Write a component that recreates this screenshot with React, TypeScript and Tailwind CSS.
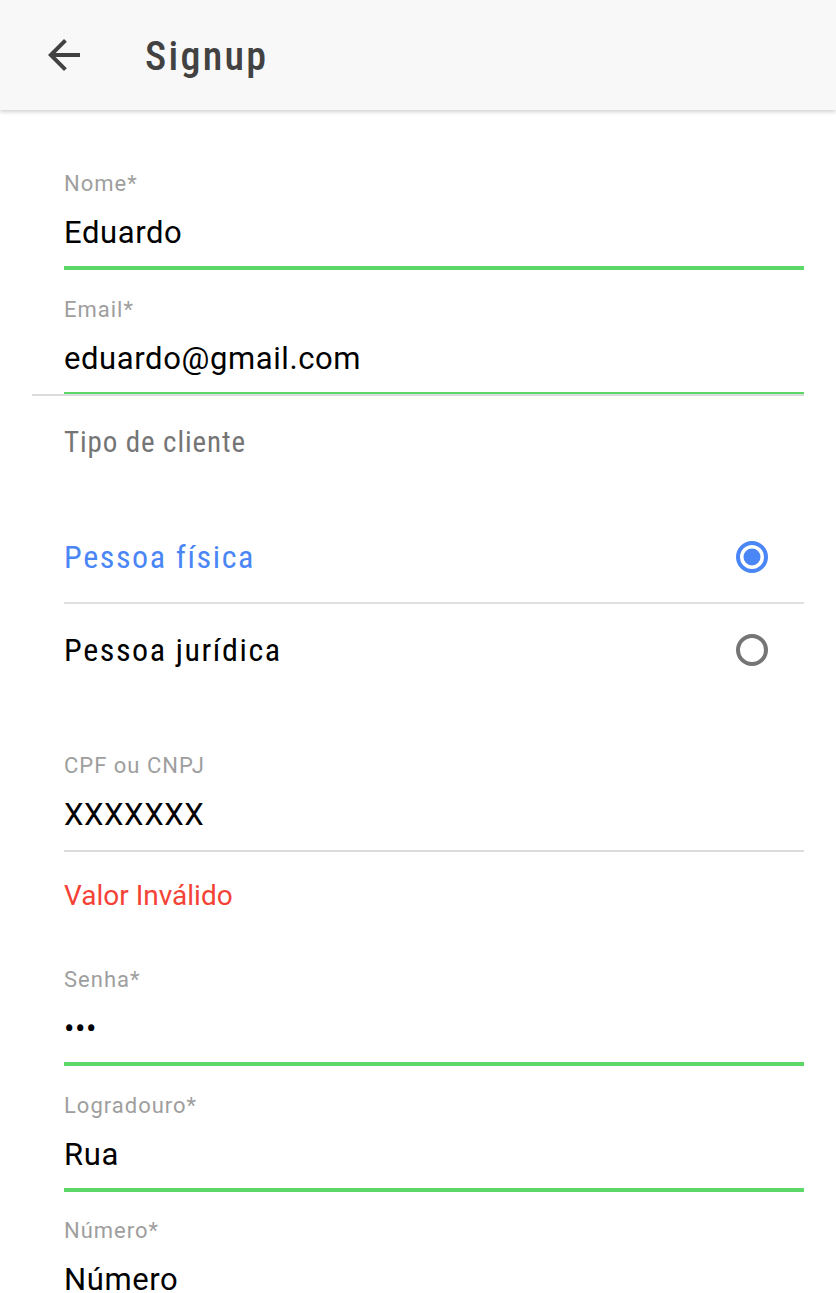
import React from 'react';

const font = { fontFamily: 'Roboto, "Noto Sans", sans-serif' };

interface FieldProps {
  label: string;
  value: string;
  line: 'green' | 'green-thin' | 'gray';
  top: string;
}

function Field({ label, value, line, top }: FieldProps) {
  const lineClass =
    line === 'green'
      ? 'h-[4px] bg-[#5cd869] mt-[15px]'
      : line === 'green-thin'
        ? 'h-[2px] bg-[#5cd869] mt-[15px]'
        : 'h-[2px] bg-[#dcdcdc] mt-[17px]';
  return (
    <div className={top}>
      <div className="text-[22px] leading-[24px] tracking-[1px] text-[#9e9e9e]">{label}</div>
      <div className="mt-[19px] text-[31px] leading-[36px] tracking-[0.6px] text-black">{value}</div>
      <div className={lineClass} />
    </div>
  );
}

function Radio({ checked }: { checked: boolean }) {
  return (
    <svg width="32" height="32" viewBox="0 0 32 32" className="mr-[36px]">
      <circle cx="16" cy="16" r="14" fill="none" stroke={checked ? '#4a86f5' : '#757575'} strokeWidth="4" />
      {checked && <circle cx="16" cy="16" r="8.5" fill="#4a86f5" />}
    </svg>
  );
}

export default function App() {
  return (
    <div className="min-h-screen bg-white" style={font}>
      <header className="h-[110px] bg-[#f8f8f8] shadow-[0_2px_4px_rgba(0,0,0,0.18)] flex items-center relative z-10">
        <svg width="48" height="48" viewBox="0 0 24 24" className="ml-[40px]" fill="#424242">
          <path d="M20 11H7.83l5.59-5.59L12 4l-8 8 8 8 1.41-1.41L7.83 13H20v-2z" />
        </svg>
        <h1 className="ml-[57px] mt-[3px] text-[40px] font-medium text-[#424242] font-stretch-condensed tracking-[2.3px]">
          Signup
        </h1>
      </header>

      <main className="pl-[64px] pr-[32px]">
        <Field label="Nome*" value="Eduardo" line="green" top="pt-[62px]" />
        <Field label="Email*" value="eduardo@gmail.com" line="green-thin" top="pt-[28px]" />
        <div className="h-[2px] bg-[#dcdcdc] ml-[-32px]" />

        <div className="h-[116px] pt-[30px]">
          <div className="text-[29px] leading-[32px] tracking-[0.9px] text-[#757575] font-stretch-condensed">
            Tipo de cliente
          </div>
        </div>

        <div className="h-[90px] flex items-center justify-between">
          <span className="text-[32px] leading-[36px] tracking-[1.6px] text-[#4a86f5] font-stretch-condensed">
            Pessoa física
          </span>
          <Radio checked />
        </div>
        <div className="h-[2px] bg-[#e0e0e0]" />
        <div className="h-[92px] flex items-center justify-between">
          <span className="text-[32px] leading-[36px] tracking-[1.6px] text-black font-stretch-condensed">
            Pessoa jurídica
          </span>
          <Radio checked={false} />
        </div>

        <Field label="CPF ou CNPJ" value="XXXXXXX" line="gray" top="pt-[58px]" />
        <div className="pt-[28px] text-[28px] leading-[32px] text-[#f44336]">Valor Inválido</div>

        <Field label="Senha*" value="•••" line="green" top="pt-[56px]" />
        <Field label="Logradouro*" value="Rua" line="green" top="pt-[28px]" />

        <div className="pt-[27px]">
          <div className="text-[22px] leading-[24px] tracking-[1px] text-[#9e9e9e]">Número*</div>
          <div className="mt-[19px] text-[31px] leading-[36px] tracking-[0.6px] text-black">Número</div>
        </div>
      </main>
    </div>
  );
}
